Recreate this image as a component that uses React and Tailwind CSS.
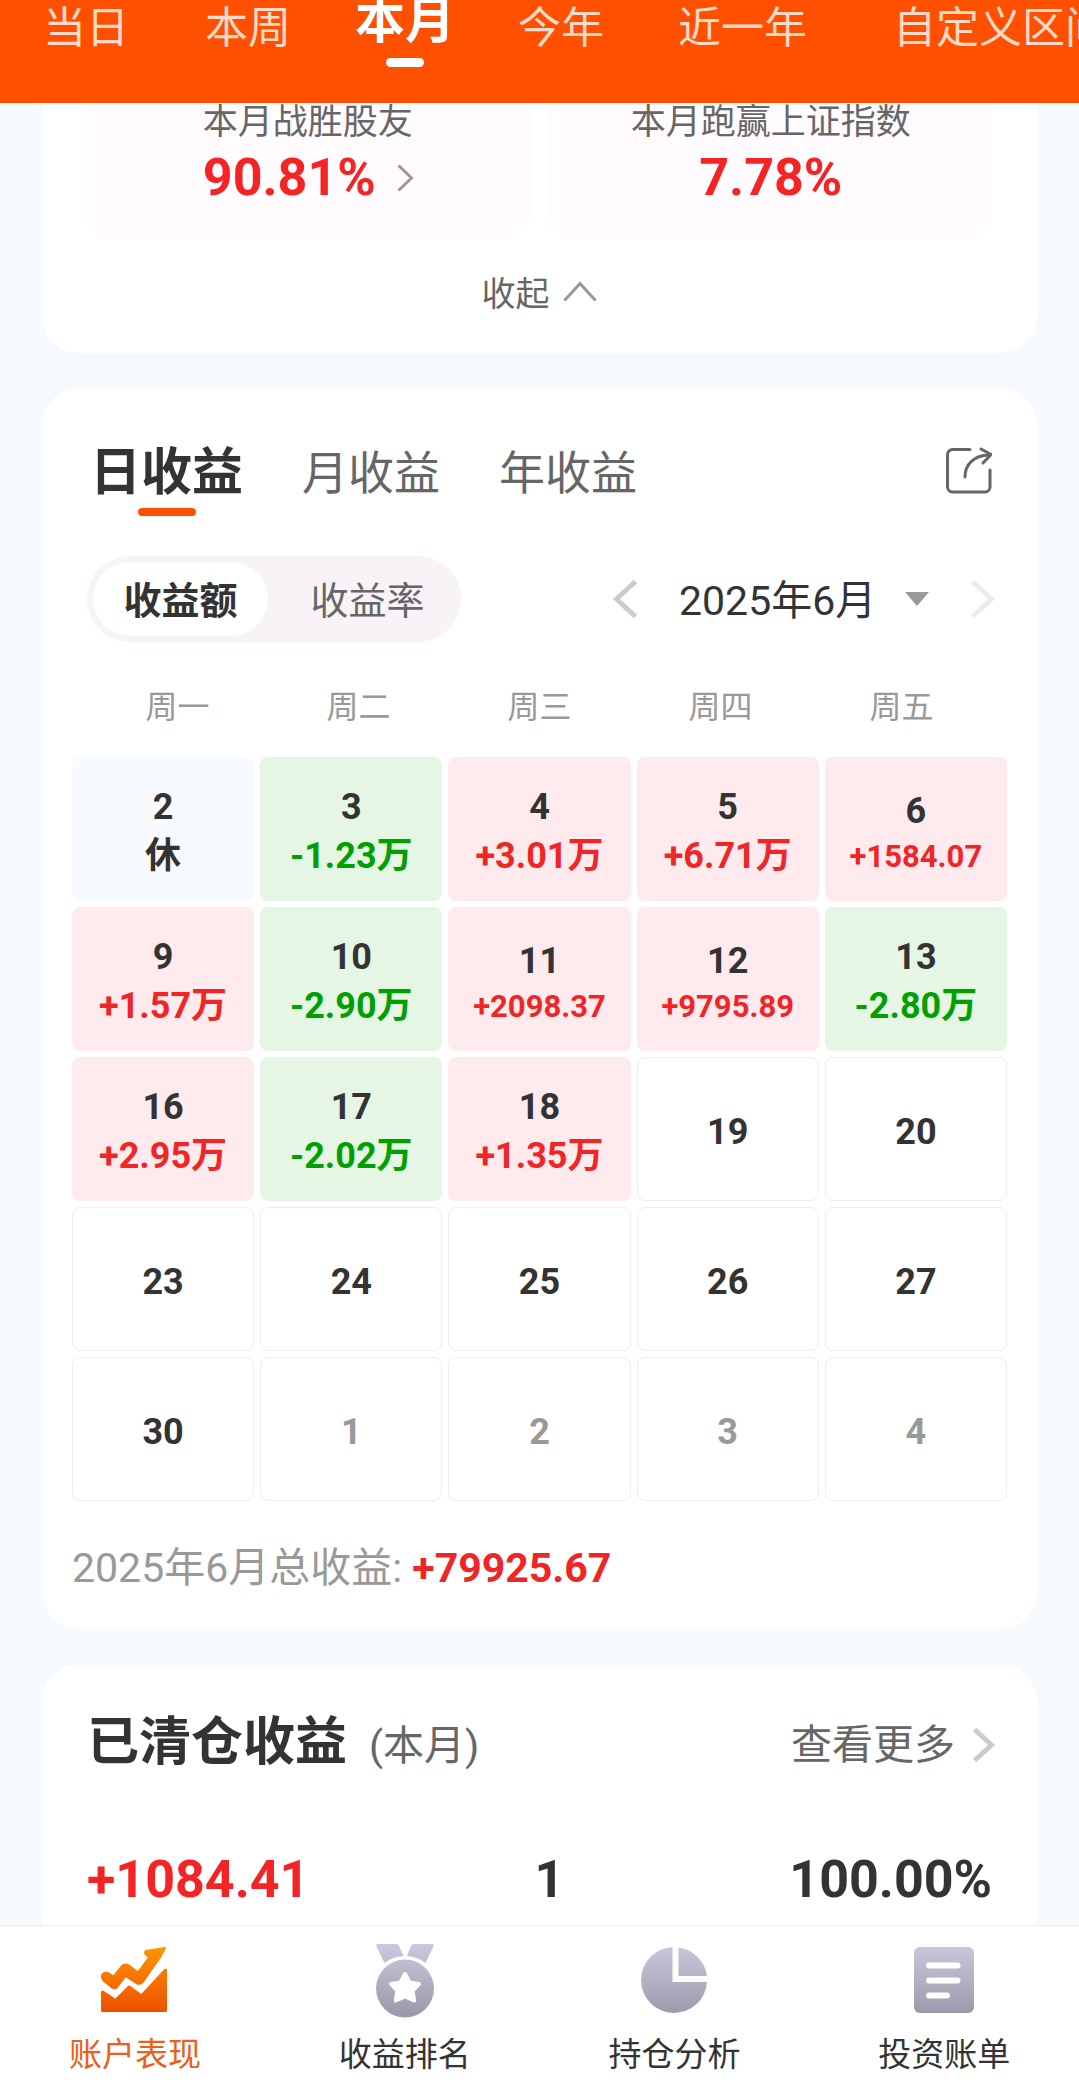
const FONT = "font-['Roboto','Noto_Sans_CJK_SC',sans-serif]";

const RANGES = [
  { label: "当日", space: "ml-[43px]" },
  { label: "本周", space: "ml-[76px]" },
  { label: "本月", space: "ml-[64px]", active: true },
  { label: "今年", space: "ml-[63px]" },
  { label: "近一年", space: "ml-[74px]" },
  { label: "自定义区间", space: "ml-[86px]" },
];

const WEEKDAYS = ["周一", "周二", "周三", "周四", "周五"];

const DAYS = [
  { day: 2, text: "休", kind: "rest" },
  { day: 3, text: "-1.23万", kind: "loss" },
  { day: 4, text: "+3.01万", kind: "gain" },
  { day: 5, text: "+6.71万", kind: "gain" },
  { day: 6, text: "+1584.07", kind: "gain", small: true },
  { day: 9, text: "+1.57万", kind: "gain" },
  { day: 10, text: "-2.90万", kind: "loss" },
  { day: 11, text: "+2098.37", kind: "gain", small: true },
  { day: 12, text: "+9795.89", kind: "gain", small: true },
  { day: 13, text: "-2.80万", kind: "loss" },
  { day: 16, text: "+2.95万", kind: "gain" },
  { day: 17, text: "-2.02万", kind: "loss" },
  { day: 18, text: "+1.35万", kind: "gain" },
  { day: 19, kind: "empty" },
  { day: 20, kind: "empty" },
  { day: 23, kind: "empty" },
  { day: 24, kind: "empty" },
  { day: 25, kind: "empty" },
  { day: 26, kind: "empty" },
  { day: 27, kind: "empty" },
  { day: 30, kind: "empty" },
  { day: 1, kind: "next" },
  { day: 2, kind: "next" },
  { day: 3, kind: "next" },
  { day: 4, kind: "next" },
];

const CELL = {
  rest: "bg-[#f7faff]",
  loss: "bg-[#e5f6e4]",
  gain: "bg-[#ffeaed]",
  empty: "border border-[#eeeeee] bg-white",
  next: "border border-[#eeeeee] bg-white",
};

const AMOUNT = {
  rest: "text-[#333333]",
  loss: "text-[#00a000]",
  gain: "text-[#f02525]",
};

function Chevron({ dir = "right", w, h, stroke, className }) {
  const i = stroke / 2 + 1;
  const paths = {
    right: `M${i} ${i}L${w - i} ${h / 2}L${i} ${h - i}`,
    left: `M${w - i} ${i}L${i} ${h / 2}L${w - i} ${h - i}`,
    up: `M${i} ${h - i}L${w / 2} ${i}L${w - i} ${h - i}`,
  };
  return (
    <svg width={w} height={h} viewBox={`0 0 ${w} ${h}`} fill="none" className={className} aria-hidden="true">
      <path d={paths[dir]} stroke="currentColor" strokeWidth={stroke} />
    </svg>
  );
}

function ShareIcon() {
  return (
    <svg width="48" height="48" viewBox="0 0 48 48" fill="none" stroke="#666666" strokeWidth="3" strokeLinecap="round" aria-hidden="true">
      <path d="M26 3.5H8.500A5 5 0 0 0 3.500 8.500V41A5 5 0 0 0 8.500 46H41A5 5 0 0 0 46 41V24" />
      <path d="M21 31C21 18 30 9.500 45 9" />
      <path d="M37 3L47 8.500L39 17" strokeLinejoin="round" />
    </svg>
  );
}

function Gradient({ id, from, to }) {
  return (
    <defs>
      <linearGradient id={id} x1="0" y1="0" x2="0" y2="76" gradientUnits="userSpaceOnUse">
        <stop offset="0.06" stopColor={from} />
        <stop offset="0.95" stopColor={to} />
      </linearGradient>
    </defs>
  );
}

function PerformanceIcon() {
  return (
    <svg width="76" height="76" viewBox="0 0 76 76" aria-hidden="true">
      <Gradient id="g-perf" from="#ff9500" to="#ed4e00" />
      <g fill="url(#g-perf)" stroke="url(#g-perf)" strokeLinejoin="round">
        <path strokeWidth="2" d="M68 6L48.500 9L48 11.500L52 15.500L41 30.500L32 23.500Q28 21 24.500 24.500L16.500 34.500L12 31.500Q8 29.500 5.500 32.500Q4 35.500 6.500 38.500L15 45.500Q18 47.500 20.500 44.500L28.500 34L40 41.500Q43.500 42.500 46 39.500L62.500 16Z" />
        <path strokeWidth="3" d="M5.500 50L18.500 58.500L32 45L44.500 54L68.500 28V68.500H5.500Z" />
      </g>
    </svg>
  );
}

function MedalIcon() {
  return (
    <svg width="76" height="76" viewBox="0 0 76 76" aria-hidden="true">
      <Gradient id="g-medal" from="#c9c7dc" to="#9b99aa" />
      <g fill="url(#g-medal)">
        <path d="M11 2H29Q31 2 32 4L36.500 14Q25 15 17.500 21L9.500 4.500Q8.500 2 11 2Z" />
        <path d="M65 2H47Q45 2 44 4L40 14Q51 15 58.500 21L66.500 4.500Q67.500 2 65 2Z" />
        <circle cx="38" cy="46.500" r="29" />
      </g>
      <path
        d="M38 32L42.500 40.500L52 42L45.500 49L47.200 58.500L38 54.500L28.800 58.500L30.500 49L24 42L33.500 40.500Z"
        fill="white"
        stroke="white"
        strokeWidth="4"
        strokeLinejoin="round"
      />
    </svg>
  );
}

function PieIcon() {
  return (
    <svg width="76" height="76" viewBox="0 0 76 76" aria-hidden="true">
      <Gradient id="g-pie" from="#c9c7dc" to="#9b99aa" />
      <g fill="url(#g-pie)">
        <path d="M36.500 5A33 33 0 1 0 71 40H36.500Z" />
        <path d="M42.500 5.500A33 33 0 0 1 71 34H42.500Z" />
      </g>
    </svg>
  );
}

function BillIcon() {
  return (
    <svg width="76" height="76" viewBox="0 0 76 76" aria-hidden="true">
      <Gradient id="g-bill" from="#c9c7dc" to="#9b99aa" />
      <rect x="8" y="5" width="60" height="66" rx="6" fill="url(#g-bill)" />
      <path d="M23 23.500H51.500M23 38.500H51.500M23 53.500H41" stroke="white" strokeWidth="6" strokeLinecap="round" />
    </svg>
  );
}

const NAV = [
  { label: "账户表现", Icon: PerformanceIcon, active: true },
  { label: "收益排名", Icon: MedalIcon },
  { label: "持仓分析", Icon: PieIcon },
  { label: "投资账单", Icon: BillIcon },
];

function RangeTabs() {
  return (
    <header className="h-[103px] overflow-hidden bg-[#ff5000]">
      <div className="flex items-start">
        {RANGES.map(({ label, space, active }) => (
          <button
            key={label}
            className={`${space} flex shrink-0 flex-col items-center whitespace-nowrap ${
              active ? "text-[50px] leading-[42px] font-bold text-white" : "pt-1 text-[43px] leading-[48px] text-[#ffdac8]"
            }`}
          >
            {label}
            {active && <span className="mt-4 h-[9px] w-[38px] rounded-full bg-white" />}
          </button>
        ))}
      </div>
    </header>
  );
}

function SummaryCard() {
  return (
    <section className="mx-[42px] rounded-b-[36px] bg-white px-[45px] pb-[39px]">
      <div className="grid grid-cols-2 gap-5">
        <div className="flex justify-center rounded-b-3xl bg-[#fffbff] pb-[30px]">
          <a href="#rank" className="block">
            <div className="text-[35px] leading-[40px] text-[#666666]">本月战胜股友</div>
            <div className="mt-[5px] flex items-center gap-5 text-[52px] leading-[60px] font-bold text-[#f52424]">
              90.81%
              <Chevron w={18} h={30} stroke={3} className="text-[#999999]" />
            </div>
          </a>
        </div>
        <div className="rounded-b-3xl bg-[#fffbff] pb-[30px] text-center">
          <div className="text-[35px] leading-[40px] text-[#666666]">本月跑赢上证指数</div>
          <div className="mt-[5px] text-[52px] leading-[60px] font-bold text-[#f52424]">7.78%</div>
        </div>
      </div>
      <button className="mx-auto mt-9 flex items-center gap-3 text-[34px] leading-[40px] text-[#666666]">
        收起
        <Chevron dir="up" w={36} h={22} stroke={3} className="mb-1 text-[#999999]" />
      </button>
    </section>
  );
}

function CalendarCard() {
  return (
    <section className="mx-[42px] mt-9 rounded-[36px] bg-white pt-[53px] pb-9">
      <div className="mx-[45px] flex items-start justify-between">
        <div className="ml-[3px] flex gap-[59px]">
          <button className="flex flex-col items-center text-[51px] leading-[62px] font-bold text-[#333333]">
            日收益
            <span className="mt-1 h-2 w-[58px] rounded-full bg-[#ff5000]" />
          </button>
          <button className="h-[62px] text-[46px] leading-[62px] text-[#666666]">月收益</button>
          <button className="h-[62px] text-[46px] leading-[62px] text-[#666666]">年收益</button>
        </div>
        <button aria-label="分享" className="mt-1">
          <ShareIcon />
        </button>
      </div>

      <div className="mx-[45px] mt-10 flex items-center justify-between">
        <div className="flex gap-3 rounded-full bg-[#f7f3f7] p-[6px] text-[38px] leading-[70px]">
          <button className="w-[175px] rounded-full bg-white pt-1 font-bold text-[#333333]">收益额</button>
          <button className="w-[175px] rounded-full pt-1 text-[#666666]">收益率</button>
        </div>
        <div className="-mr-[3px] flex items-center">
          <button aria-label="上个月">
            <Chevron dir="left" w={26} h={42} stroke={5} className="text-[#cccccc]" />
          </button>
          <div className="relative ml-10 flex items-center">
            <select aria-label="月份" className="w-[250px] appearance-none bg-transparent pt-1 text-[41px] leading-[60px] text-[#333333]">
              <option>2025年6月</option>
            </select>
            <svg width="24" height="14" viewBox="0 0 24 14" className="pointer-events-none absolute right-0" aria-hidden="true">
              <path d="M0 0H24L12 14Z" fill="#999999" />
            </svg>
          </div>
          <button aria-label="下个月" className="ml-10">
            <Chevron w={26} h={42} stroke={5} className="text-[#eeebee]" />
          </button>
        </div>
      </div>

      <div className="mx-[45px] mt-[45px] grid grid-cols-5 text-center text-[32px] leading-[40px] text-[#999999]">
        {WEEKDAYS.map((d) => (
          <div key={d}>{d}</div>
        ))}
      </div>

      <div className="mx-[30px] mt-[30px] grid grid-cols-5 gap-[6px]">
        {DAYS.map(({ day, text, kind, small }, i) => (
          <button key={i} className={`${CELL[kind]} flex h-36 flex-col items-center justify-center rounded-lg pt-[6px] font-bold`}>
            <span className={`text-[36px] leading-[49px] ${kind === "next" ? "text-[#999999]" : "text-[#333333]"}`}>{day}</span>
            {text && (
              <span className={`${AMOUNT[kind]} ${small ? "text-[31px] leading-[41px]" : "text-[36px] leading-[49px]"}`}>{text}</span>
            )}
          </button>
        ))}
      </div>

      <p className="mx-[30px] mt-[42px] text-[41px] leading-[50px] text-[#999999]">
        2025年6月总收益: <span className="font-bold text-[#f02525]">+79925.67</span>
      </p>
    </section>
  );
}

function ClearedCard() {
  return (
    <section className="mx-[42px] mt-9 flex-1 rounded-t-[36px] bg-white px-[45px] pt-12">
      <div className="flex items-center justify-between leading-[60px]">
        <h2 className="text-[52px] font-bold text-[#333333]">
          已清仓收益<span className="ml-[22px] text-[41px] font-normal text-[#666666]">(本月)</span>
        </h2>
        <a href="#more" className="-mr-[3px] flex items-center gap-4 text-[41px] text-[#666666]">
          查看更多
          <Chevron w={24} h={38} stroke={5} className="text-[#cccccc]" />
        </a>
      </div>
      <div className="mt-[74px] flex justify-between text-[52px] leading-[60px] font-bold text-[#333333]">
        <span className="text-[#f52424]">+1084.41</span>
        <span>1</span>
        <span>100.00%</span>
      </div>
    </section>
  );
}

function BottomNav() {
  return (
    <nav className="grid grid-cols-4 border-t border-[#eeeeee] bg-white pt-4 pb-[15px]">
      {NAV.map(({ label, Icon, active }) => (
        <a
          key={label}
          href={`#${label}`}
          className={`flex flex-col items-center gap-[17px] text-[33px] leading-[40px] ${active ? "text-[#e8611a]" : "text-[#333333]"}`}
        >
          <Icon />
          {label}
        </a>
      ))}
    </nav>
  );
}

export default function App() {
  return (
    <div className={`${FONT} flex min-h-screen flex-col overflow-hidden bg-[#f6faff]`}>
      <RangeTabs />
      <main className="flex flex-1 flex-col">
        <SummaryCard />
        <CalendarCard />
        <ClearedCard />
      </main>
      <BottomNav />
    </div>
  );
}
